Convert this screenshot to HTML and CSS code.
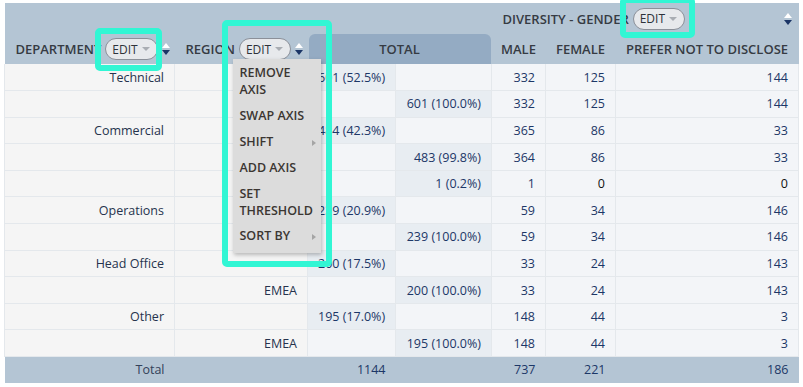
FILE: index.html
```html
<!DOCTYPE html>
<html lang="en">
<head>
    <meta charset="UTF-8">
    <title>Pivot - Diversity by Department</title>
    <link rel="stylesheet" href="styles.css">
</head>
<body>
    <div class="pivot">
        <table class="grid">
            <colgroup>
                <col style="width: 170px">
                <col style="width: 133px">
                <col style="width: 88px">
                <col style="width: 96px">
                <col style="width: 54px">
                <col style="width: 70px">
                <col style="width: 183px">
            </colgroup>
            <thead>
                <tr class="head-top">
                    <th rowspan="2" class="axis-head">
                        <div class="axis-label">
                            <span class="axis-name">DEPARTMENT</span>
                            <button class="edit">EDIT<i class="caret"></i></button>
                            <span class="sort"></span>
                        </div>
                    </th>
                    <th rowspan="2" class="axis-head region-head">
                        <div class="axis-label">
                            <span class="axis-name">REGION</span>
                            <button class="edit">EDIT<i class="caret"></i></button>
                            <span class="sort"></span>
                        </div>
                        <!-- open axis menu -->
                        <ul class="axis-menu">
                            <li>REMOVE AXIS</li>
                            <li>SWAP AXIS</li>
                            <li class="sub">SHIFT</li>
                            <li>ADD AXIS</li>
                            <li>SET THRESHOLD</li>
                            <li class="sub">SORT BY</li>
                        </ul>
                    </th>
                    <th colspan="2"></th>
                    <th colspan="3" class="axis-head">
                        <div class="axis-label top">
                            <span class="axis-name">DIVERSITY - GENDER</span>
                            <button class="edit">EDIT<i class="caret"></i></button>
                            <span class="sort"></span>
                        </div>
                    </th>
                </tr>
                <tr class="head-cols">
                    <th colspan="2" class="total-head"><span>TOTAL</span></th>
                    <th>MALE</th>
                    <th>FEMALE</th>
                    <th>PREFER NOT TO DISCLOSE</th>
                </tr>
            </thead>
            <tbody>
                <!-- region labels under the open menu are left blank -->
                <tr><td class="dim">Technical</td><td class="dim"></td><td class="sum">601 (52.5%)</td><td></td><td>332</td><td>125</td><td>144</td></tr>
                <tr><td class="dim"></td><td class="dim"></td><td></td><td class="sum">601 (100.0%)</td><td>332</td><td>125</td><td>144</td></tr>
                <tr><td class="dim">Commercial</td><td class="dim"></td><td class="sum">484 (42.3%)</td><td></td><td>365</td><td>86</td><td>33</td></tr>
                <tr><td class="dim"></td><td class="dim"></td><td></td><td class="sum">483 (99.8%)</td><td>364</td><td>86</td><td>33</td></tr>
                <tr><td class="dim"></td><td class="dim"></td><td></td><td class="sum">1 (0.2%)</td><td>1</td><td class="zero">0</td><td class="zero">0</td></tr>
                <tr><td class="dim">Operations</td><td class="dim"></td><td class="sum">239 (20.9%)</td><td></td><td>59</td><td>34</td><td>146</td></tr>
                <tr><td class="dim"></td><td class="dim"></td><td></td><td class="sum">239 (100.0%)</td><td>59</td><td>34</td><td>146</td></tr>
                <tr><td class="dim">Head Office</td><td class="dim"></td><td class="sum">200 (17.5%)</td><td></td><td>33</td><td>24</td><td>143</td></tr>
                <tr><td class="dim"></td><td class="dim">EMEA</td><td></td><td class="sum">200 (100.0%)</td><td>33</td><td>24</td><td>143</td></tr>
                <tr><td class="dim">Other</td><td class="dim"></td><td class="sum">195 (17.0%)</td><td></td><td>148</td><td>44</td><td>3</td></tr>
                <tr><td class="dim"></td><td class="dim">EMEA</td><td></td><td class="sum">195 (100.0%)</td><td>148</td><td>44</td><td>3</td></tr>
            </tbody>
            <tfoot>
                <tr><td class="dim">Total</td><td></td><td>1144</td><td></td><td>737</td><td>221</td><td>186</td></tr>
            </tfoot>
        </table>

        <!-- Highlight callouts -->
        <div class="callout callout-dept"></div>
        <div class="callout callout-region"></div>
        <div class="callout callout-gender"></div>
    </div>
</body>
</html>
```

FILE: styles.css
```css
* {
    margin: 0;
    padding: 0;
    box-sizing: border-box;
}

body {
    font-family: 'Open Sans', 'Liberation Sans', sans-serif;
    background: #ffffff;
    width: 803px;
    height: 387px;
    overflow: hidden;
}

.pivot {
    position: relative;
    padding: 3px 5px 0 4px;
}

.grid {
    width: 794px;
    table-layout: fixed;
    border-collapse: collapse;
    font-size: 12.5px;
    font-weight: 500;
    color: #1c3767;
}

/* Header */
thead th {
    background: #b4c5d4;
    color: #363b43;
    font-size: 13px;
    font-weight: 600;
    padding: 0;
    white-space: nowrap;
}

.head-top th {
    height: 31px;
}

.head-cols th {
    height: 30px;
    text-align: center;
}

.axis-head {
    vertical-align: bottom;
    text-align: left;
}

.region-head {
    position: relative;
}

.axis-label {
    display: flex;
    align-items: center;
    height: 30px;
    padding: 0 5px 0 11px;
    overflow: hidden;
}

.axis-label.top {
    height: 31px;
    padding-right: 7px;
}

.axis-name {
    margin-right: 4px;
}

.edit {
    display: flex;
    align-items: center;
    gap: 4px;
    height: 22px;
    padding: 0 7px 0 6px;
    border: 1px solid #8b9099;
    border-radius: 11px;
    background: #e7e9ec;
    font-family: inherit;
    font-size: 12px;
    font-weight: 500;
    color: #2e323a;
    flex-shrink: 0;
}

.caret {
    width: 0;
    height: 0;
    border-left: 4px solid transparent;
    border-right: 4px solid transparent;
    border-top: 4px solid #a9adb3;
}

.sort {
    margin-left: auto;
    flex-shrink: 0;
    display: flex;
    flex-direction: column;
    gap: 2px;
}

.sort::before, .sort::after {
    content: '';
    width: 0;
    height: 0;
    border-left: 4px solid transparent;
    border-right: 4px solid transparent;
}

.sort::before {
    border-bottom: 5px solid #ffffff;
}

.sort::after {
    border-top: 5px solid #1b3566;
}

.head-cols .total-head {
    padding: 0 1px 0 1px;
    background: #b4c5d4;
}

.total-head span {
    display: block;
    height: 30px;
    line-height: 30px;
    background: #94abc3;
    border-radius: 6px 6px 0 0;
}

/* Axis menu */
.axis-menu {
    position: absolute;
    top: 56px;
    left: 58px;
    width: 88px;
    list-style: none;
    background: #dcdcdc;
    box-shadow: 1px 2px 4px rgba(0, 0, 0, 0.25);
    padding: 1px 0 4px;
    z-index: 5;
    white-space: normal;
}

.axis-menu li {
    position: relative;
    padding: 4.4px 6px 4.4px 7px;
    font-size: 12.5px;
    font-weight: 600;
    line-height: 17px;
    color: #3b3632;
}

.axis-menu li.sub::after {
    content: '';
    position: absolute;
    right: 5px;
    top: 11px;
    border-top: 3.5px solid transparent;
    border-bottom: 3.5px solid transparent;
    border-left: 4px solid #a5a5a5;
}

/* Body */
tbody td {
    height: 26.6px;
    padding: 0 10px;
    text-align: right;
    background: #f3f5f8;
    border: 1px solid #e4e8ec;
    white-space: nowrap;
}

tbody td.dim {
    background: #f5f5f5;
    color: #26334d;
}

tbody td.sum {
    background: #e8edf2;
}

tbody td.zero {
    color: #111111;
}

tbody tr:first-child td {
    border-top: none;
}

/* Footer */
tfoot td {
    height: 26px;
    padding: 0 10px;
    text-align: right;
    background: #b4c5d4;
}

tfoot td.dim {
    color: #33425a;
}

/* Highlight callouts */
.callout {
    position: absolute;
    border: 6px solid #31f6d4;
    border-radius: 5px;
    z-index: 10;
}

.callout-dept {
    left: 95px;
    top: 28px;
    width: 67px;
    height: 43px;
}

.callout-region {
    left: 222px;
    top: 20px;
    width: 110px;
    height: 247px;
}

.callout-gender {
    left: 620px;
    top: -3px;
    width: 75px;
    height: 41px;
}
```
